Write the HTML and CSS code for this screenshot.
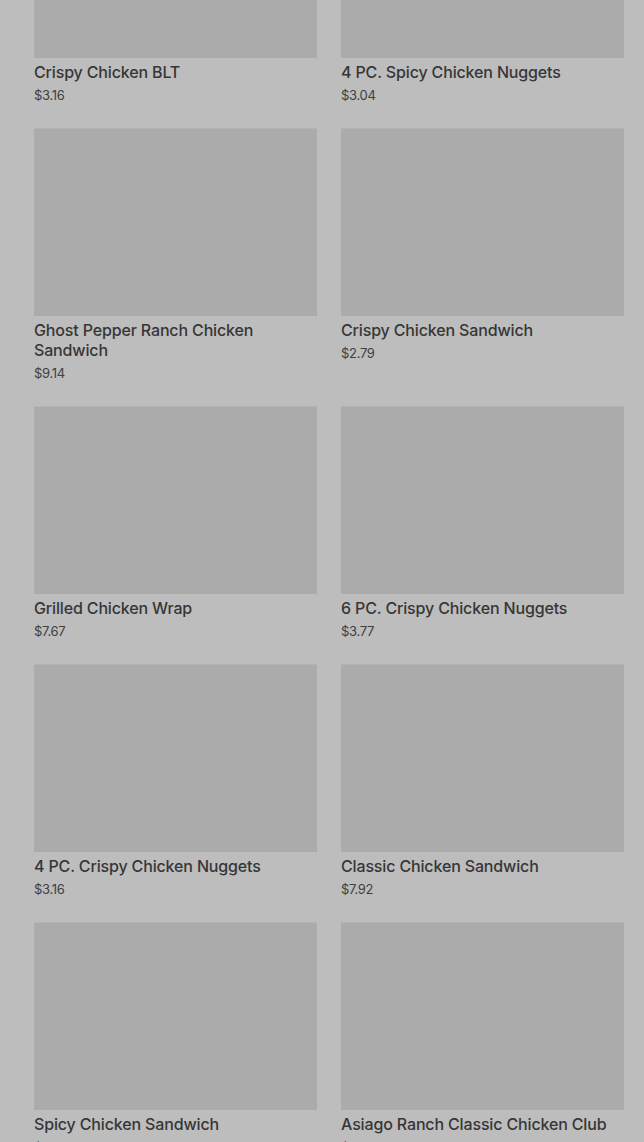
FILE: index.html
```html
<!DOCTYPE html>
<html lang="en">
<head>
    <meta charset="UTF-8">
    <meta name="viewport" content="width=device-width, initial-scale=1.0">
    <title>Menu</title>
    <link rel="stylesheet" href="styles.css">
</head>
<body>

    <!-- menu grid (scrolled) -->
    <div class="menu">
        <div class="item">
            <div class="photo"></div>
            <div class="name">Crispy Chicken BLT</div>
            <div class="price">$3.16</div>
        </div>
        <div class="item">
            <div class="photo"></div>
            <div class="name">4 PC. Spicy Chicken Nuggets</div>
            <div class="price">$3.04</div>
        </div>
        <div class="item">
            <div class="photo"></div>
            <div class="name">Ghost Pepper Ranch Chicken Sandwich</div>
            <div class="price">$9.14</div>
        </div>
        <div class="item">
            <div class="photo"></div>
            <div class="name">Crispy Chicken Sandwich</div>
            <div class="price">$2.79</div>
        </div>
        <div class="item">
            <div class="photo"></div>
            <div class="name">Grilled Chicken Wrap</div>
            <div class="price">$7.67</div>
        </div>
        <div class="item">
            <div class="photo"></div>
            <div class="name">6 PC. Crispy Chicken Nuggets</div>
            <div class="price">$3.77</div>
        </div>
        <div class="item">
            <div class="photo"></div>
            <div class="name">4 PC. Crispy Chicken Nuggets</div>
            <div class="price">$3.16</div>
        </div>
        <div class="item">
            <div class="photo"></div>
            <div class="name">Classic Chicken Sandwich</div>
            <div class="price">$7.92</div>
        </div>
        <div class="item">
            <div class="photo"></div>
            <div class="name">Spicy Chicken Sandwich</div>
            <div class="price">$4.49</div>
        </div>
        <div class="item">
            <div class="photo"></div>
            <div class="name">Asiago Ranch Classic Chicken Club</div>
            <div class="price">$8.19</div>
        </div>
    </div>

</body>
</html>
```

FILE: styles.css
```css
body {
    margin: 0;
    height: 1142px;
    overflow: hidden;
    background-color: #bdbdbd;
    font-family: Inter, "Noto Sans", sans-serif;
    color: #363636;
}

.menu {
    display: grid;
    grid-template-columns: 283px 283px;
    column-gap: 24px;
    row-gap: 23px;
    padding: 0 20px 0 34px;
    margin-top: -130px;
}

.photo {
    height: 188px;
    background-color: #ababab;
    border-top: 1px solid #b3b3b3;
    box-sizing: border-box;
}

.name {
    margin-top: 4px;
    font-size: 16px;
    font-weight: 500;
    line-height: 20px;
    letter-spacing: -0.15px;
}

.price {
    margin-top: 3px;
    font-size: 13px;
    line-height: 20px;
    color: #404040;
    letter-spacing: -0.3px;
}
```
